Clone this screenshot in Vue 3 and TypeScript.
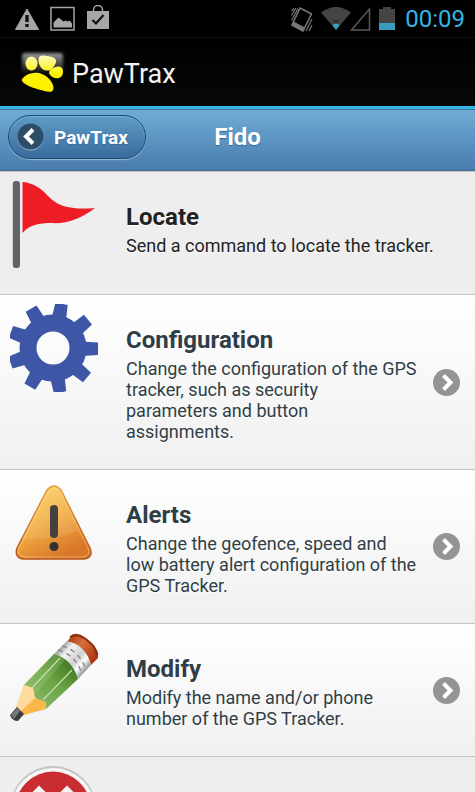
<script setup lang="ts">
type IconName = 'flag' | 'gear' | 'warning' | 'pencil' | 'remove'

interface MenuItem {
  icon: IconName
  title?: string
  text?: string
  href?: string
}

const items: MenuItem[] = [
  { icon: 'flag', title: 'Locate', text: 'Send a command to locate the tracker.' },
  {
    icon: 'gear',
    title: 'Configuration',
    text: 'Change the configuration of the GPS tracker, such as security parameters\u00a0and button assignments.',
    href: '#configuration',
  },
  {
    icon: 'warning',
    title: 'Alerts',
    text: 'Change the geofence, speed and low\u00a0battery alert configuration of the GPS Tracker.',
    href: '#alerts',
  },
  {
    icon: 'pencil',
    title: 'Modify',
    text: 'Modify the name and/or phone number of the GPS Tracker.',
    href: '#modify',
  },
  { icon: 'remove' },
]

const teeth = Array.from({ length: 9 }, (_, i) => i * 40)
</script>

<template>
  <div class="screen">
    <div class="status">
      <div class="group left">
        <svg width="26" height="26" viewBox="0 0 26 26" aria-hidden="true">
          <path d="M13 3 24.500 23.500H1.500Z" fill="#a6a6a6" stroke="#a6a6a6" stroke-linejoin="round" />
          <path d="M11.300 9h3.400v7h-3.400zM11.300 18h3.400v3h-3.400z" fill="#111" />
        </svg>
        <svg width="26" height="26" viewBox="0 0 26 26" aria-hidden="true">
          <rect x="1" y="1.500" width="23" height="22.500" fill="none" stroke="#a6a6a6" stroke-width="1.500" />
          <path d="M3.500 21.500v-5l5-5 5 4 2-1 2 1 2-1 2.500 3v4z" fill="#a6a6a6" />
        </svg>
        <svg width="24" height="28" viewBox="0 0 24 28" aria-hidden="true">
          <path d="M7.500 8V5a4.500 4.500 0 0 1 9 0v3" fill="none" stroke="#a6a6a6" stroke-width="1.400" />
          <path d="M1 6h22v18H1z" fill="#a6a6a6" />
          <path d="m6.500 15 3.500 3.500 7.500-8.500" fill="none" stroke="#111" stroke-width="2.200" />
        </svg>
      </div>
      <div class="group">
        <svg class="vibrate" width="22" height="28" viewBox="0 0 22 28" fill="none" stroke="#777" stroke-width="1.200" aria-hidden="true">
          <path d="m9 3 11.500 6L12 26 1 20Z" stroke-width="1.600" stroke-linejoin="round" />
          <path d="m1 20 11 6 1.500-3L2.500 17Z" fill="#777" />
          <path d="M.500 6 3 3.500M.500 10.500 5 3M.500 15.500 7 3.500M15 26l6-12M18 26l3-6" />
        </svg>
        <svg class="wifi" width="30" height="26" viewBox="0 0 30 26" aria-hidden="true">
          <path d="M0 6.500Q15-4.500 30 6.500L15 24Z" fill="#444" />
          <path d="M11.500 19q3.500-2.500 7 0L15 24Z" fill="#33a5cc" />
          <path d="M12 14h6l-2 3h-2z" fill="#2c2c2c" />
        </svg>
        <svg width="22" height="26" viewBox="0 0 22 26" aria-hidden="true">
          <path d="M20.500 3v21H2.500Z" fill="none" stroke="#5a5a5a" stroke-width="1.500" />
        </svg>
        <svg class="battery" width="16" height="26" viewBox="0 0 16 26" aria-hidden="true">
          <path d="M0 3h4V1h8v2h4v21H0z" fill="#444" />
          <path d="M0 17h16v7H0z" fill="#3a9bc1" />
        </svg>
        <time class="clock">00:09</time>
      </div>
    </div>

    <div class="appbar">
      <svg width="46" height="48" viewBox="0 0 46 48" aria-hidden="true">
        <defs>
          <linearGradient id="glow" x1="0" y1="0" x2="0" y2="1">
            <stop offset="0" stop-color="#fff" stop-opacity=".6" />
            <stop offset="1" stop-color="#fff" stop-opacity="0" />
          </linearGradient>
          <linearGradient id="paw" x1="0" y1="5" x2="0" y2="24" gradientUnits="userSpaceOnUse">
            <stop offset="0" stop-color="#fdf9c2" />
            <stop offset="1" stop-color="#fff200" />
          </linearGradient>
          <filter id="soft"><feGaussianBlur stdDeviation="1.500" /></filter>
        </defs>
        <rect x="2" y="3" width="41" height="21" rx="3" fill="url(#glow)" filter="url(#soft)" />
        <g fill="url(#paw)">
          <ellipse cx="11.500" cy="13.500" rx="6" ry="7" />
          <path d="M18.500 10c0-4.500 3-5 7.500-4 5 0 11 2 10 6-1 4-5 9.500-9.500 8.500-5 0-8-6-8-10.500Z" />
          <path d="M29.500 24c-2-4 4-7 9-7.500 6-.5 6 10 .500 11.500-4 1-8-1-9.500-4Z" />
          <path d="M2 29c4-5 10-7 17-6 8 2 14.500 9 14.500 15 0 5-5 4-9 3C16 39 0 34 2 29Z" />
        </g>
      </svg>
      <span class="appname">PawTrax</span>
    </div>

    <header class="header">
      <a class="back" href="#home">
        <svg width="27" height="28" viewBox="0 0 27 28" aria-hidden="true">
          <circle cx="13.500" cy="14.500" r="13" fill="#8fb0d0" />
          <circle cx="13.500" cy="13.500" r="13" fill="#2c4c68" />
          <path d="m16 6.500-7 7 7 7" fill="none" stroke="#fff" stroke-width="4" />
        </svg>
        <span>PawTrax</span>
      </a>
      <h1>Fido</h1>
    </header>

    <ul class="list">
      <li v-for="item in items" :key="item.icon">
        <component :is="item.href ? 'a' : 'div'" :href="item.href" class="row" :class="item.href ? 'link' : 'plain'">
          <svg class="icon" viewBox="0 0 88 88" aria-hidden="true">
            <g v-if="item.icon === 'flag'">
              <rect x="2.800" y="0" width="7.200" height="87" rx="3" fill="#636466" />
              <path d="M12.500 1C24 2 32 8 38 15c10 11 25 14 47 12-14 11-29 16-43 15-13 0-23 2-29.500 10Z" fill="#ee1c24" />
            </g>
            <g v-else-if="item.icon === 'gear'" fill="#3d57a6">
              <path v-for="angle in teeth" :key="angle" d="M64 33 72 37.500 88 38.500v12.500L72 52 64 56Z" :transform="`rotate(${angle} 43 44)`" />
              <circle cx="43" cy="44" r="25" fill="none" stroke="#3d57a6" stroke-width="17" />
            </g>
            <g v-else-if="item.icon === 'warning'">
              <defs>
                <linearGradient id="amber" x1="0" y1="0" x2=".5" y2="1">
                  <stop offset="0" stop-color="#ffdc73" />
                  <stop offset=".6" stop-color="#f0a83f" />
                  <stop offset="1" stop-color="#d9782b" />
                </linearGradient>
                <linearGradient id="edge" x1="0" y1="0" x2="0" y2="1">
                  <stop offset="0" stop-color="#e0a13c" />
                  <stop offset="1" stop-color="#b9511e" />
                </linearGradient>
              </defs>
              <path d="M37 11q7-8 14 0l29 58q4 10-7 11H14q-10-1-7-11Z" fill="url(#amber)" stroke="url(#edge)" stroke-width="1.500" />
              <path d="M38 12q6-6 12 0l28 57q3 8-5 9H15q-9-1-6-9Z" fill="none" stroke="#ffe08a" stroke-opacity=".5" />
              <path d="M11 60 38 12q6-6 12 0l19 39Q44 62 11 60Z" fill="#fff" opacity=".1" />
              <rect x="40" y="26" width="8" height="33" rx="4" fill="#44403f" />
              <circle cx="44" cy="67.500" r="4.500" fill="#33302f" />
            </g>
            <g v-else-if="item.icon === 'pencil'">
              <defs>
                <linearGradient id="silver" x1="48" y1="16" x2="74" y2="39" gradientUnits="userSpaceOnUse">
                  <stop offset="0" stop-color="#999" />
                  <stop offset=".25" stop-color="#f4f4f4" />
                  <stop offset=".6" stop-color="#d0d0d0" />
                  <stop offset=".8" stop-color="#fff" />
                  <stop offset="1" stop-color="#999" />
                </linearGradient>
                <linearGradient id="rubber" x1="58" y1="4" x2="85" y2="28" gradientUnits="userSpaceOnUse">
                  <stop offset="0" stop-color="#a93812" />
                  <stop offset=".4" stop-color="#d8703a" />
                  <stop offset="1" stop-color="#a93410" />
                </linearGradient>
                <linearGradient id="green" x1="50" y1="24" x2="20" y2="62" gradientUnits="userSpaceOnUse">
                  <stop offset="0" stop-color="#467c28" />
                  <stop offset=".5" stop-color="#6ca543" />
                  <stop offset="1" stop-color="#82b463" />
                </linearGradient>
              </defs>
              <path d="M57 9 62 2q5-4 15 4 9 7 11 14v5l-7 7Q77 16 57 9Z" fill="url(#rubber)" />
              <path d="M60 4q8-5 18 4 8 6 9 14" fill="none" stroke="#8c2b11" stroke-width="2" />
              <path d="m44 21 13-13q19 4 24 24L68 46Q61 26 44 21Z" fill="url(#silver)" />
              <path d="M48 17q18 5 24 24M52 13q18 5 24 24" fill="none" stroke="#888" stroke-width="1.300" stroke-dasharray="5 4" />
              <path d="M44 21q18 5 24 25L36 76 14 52Z" fill="url(#green)" />
              <path d="m14 52 30-31q6 1 11 6L24 63Z" fill="#a4cc86" opacity=".3" />
              <path d="m22 55 28-30M33 67l29-30" fill="none" stroke="#c0dfaa" stroke-width="1.300" />
              <path d="m14 52 9 3 2 10 11 4v7l-22 6L6 75Z" fill="#fbb849" />
              <path d="m14 52 9 3 2 10L10 79l-4-4Z" fill="#ffdba0" />
              <path d="m7 74 7 7-6 7q-6 0-8-6Z" fill="#3d3d3d" />
              <path d="m1 82 6-7 3 3-6 8Z" fill="#777" />
            </g>
            <g v-else>
              <circle cx="43" cy="43" r="43" fill="#c4c4c4" />
              <circle cx="43" cy="44" r="42" fill="#f7f7f7" />
              <circle cx="43" cy="43.500" r="38" fill="#cb2c31" />
              <path d="M29 19.500 43 33.500 57 19.500 67 29.500 53 43.500 67 57.500 57 67.500 43 53.500 29 67.500 19 57.500 33 43.500 19 29.500Z" fill="#f5f5f5" />
            </g>
          </svg>
          <div v-if="item.title" class="body">
            <h2>{{ item.title }}</h2>
            <p>{{ item.text }}</p>
          </div>
          <svg v-if="item.href" class="chevron" viewBox="0 0 27 27" aria-hidden="true">
            <circle cx="13.500" cy="13.500" r="13.500" fill="#949494" />
            <path d="m10.500 6.500 7 7-7 7" fill="none" stroke="#fff" stroke-width="4" />
          </svg>
        </component>
      </li>
    </ul>
  </div>
</template>

<style>
body {
  margin: 0;
  background: #eee;
}
</style>

<style scoped>
.screen {
  display: flex;
  flex-direction: column;
  height: 100vh;
  overflow: hidden;
  font-family: Roboto, "Liberation Sans", sans-serif;
}
.status {
  display: flex;
  justify-content: space-between;
  align-items: center;
  flex: none;
  height: 37px;
  padding: 0 10px 0 14px;
  background: #000;
  border-bottom: 1px solid #111;
}
.group {
  display: flex;
  align-items: center;
}
.left {
  gap: 10px;
}
.vibrate {
  margin-right: 8px;
}
.wifi {
  margin-right: -2px;
}
.battery {
  margin: 0 10px 0 8px;
}
.clock {
  color: #33b5e5;
  font-size: 24px;
  line-height: 36px;
}
.appbar {
  display: flex;
  align-items: center;
  gap: 6px;
  box-sizing: border-box;
  flex: none;
  height: 71px;
  padding: 4px 20px 0;
  background: linear-gradient(#000, #060807);
  border-bottom: 3px solid #33b5e5;
}
.appname {
  color: #f3f3f3;
  font-size: 27px;
  line-height: 36px;
}
.header {
  display: grid;
  grid-template-columns: 1fr auto 1fr;
  align-items: center;
  flex: none;
  height: 60px;
  padding: 0 8px;
  background: linear-gradient(#6facd5, #497bae);
  border-top: 1px solid #456f9a;
  border-bottom: 1px solid #456f9a;
  color: #fff;
  text-shadow: 0 1px 1px #3e6790;
}
.back {
  display: flex;
  justify-self: start;
  align-items: center;
  gap: 10px;
  box-sizing: border-box;
  height: 44px;
  margin-bottom: 6px;
  padding: 0 17px 0 8px;
  border: 1px solid #145072;
  border-radius: 22px;
  background: linear-gradient(#5f9cc5, #396b9e);
  box-shadow: 0 1px 1px #9abbdc, inset 0 1px 1px #80b1d4;
  color: #fff;
  font-size: 19px;
  font-weight: 700;
  text-decoration: none;
}
h1 {
  margin: 0 0 6px;
  font-size: 24px;
  line-height: 30px;
}
.list {
  flex: 1;
  min-height: 0;
  margin: 0;
  padding: 0;
  overflow: hidden;
  list-style: none;
  background: #eee;
}
.row {
  display: flex;
  align-items: flex-start;
  gap: 28px;
  padding: 9px 15px 0 10px;
  border-top: 1px solid #c4c4c4;
  color: #222;
  text-decoration: none;
  text-shadow: 0 1px 0 #fff;
}
.plain {
  padding-bottom: 11px;
}
.link {
  background: linear-gradient(#fff, #f0f0f0);
  color: #2f3e46;
}
.icon {
  flex: none;
  width: 88px;
  height: 88px;
}
.body {
  flex: 1;
  min-width: 0;
  padding: 21px 0 27px;
}
h2 {
  margin: 0 0 3px;
  font-size: 24px;
  line-height: 30px;
}
p {
  margin: 0;
  font-size: 18px;
  line-height: 21px;
}
.chevron {
  flex: none;
  align-self: center;
  width: 27px;
  height: 27px;
  margin: 0 0 9px -13px;
}
</style>
